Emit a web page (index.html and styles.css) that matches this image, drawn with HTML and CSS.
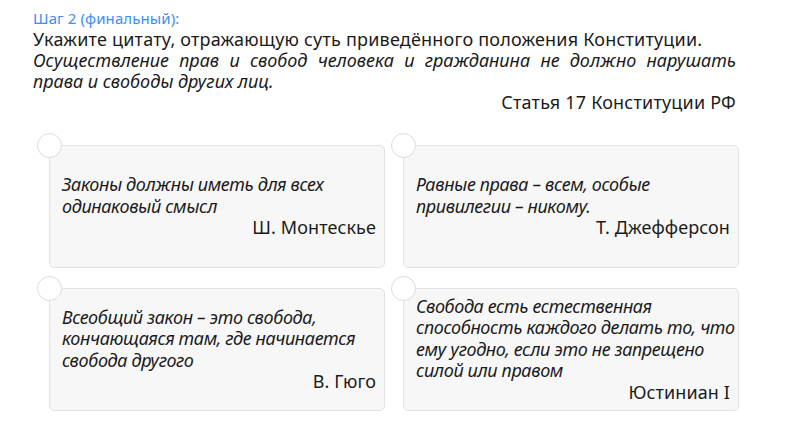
FILE: index.html
```html
<!DOCTYPE html>
<html lang="ru">
<head>
<meta charset="utf-8">
<link rel="stylesheet" href="styles.css">
</head>
<body>
<div class="page">
  <div class="step">Шаг 2 (финальный):</div>
  <div class="task">Укажите цитату, отражающую суть приведённого положения Конституции.</div>
  <div class="quote">Осуществление прав и свобод человека и гражданина не должно нарушать права и свободы других лиц.</div>
  <div class="source">Статья 17 Конституции РФ</div>
  <div class="cards">
    <div class="card">
      <span class="radio"></span>
      <div class="card-body">
        <div class="card-text">Законы должны иметь для всех одинаковый смысл</div>
        <div class="card-author">Ш. Монтескье</div>
      </div>
    </div>
    <div class="card">
      <span class="radio"></span>
      <div class="card-body">
        <div class="card-text">Равные права – всем, особые привилегии – никому.</div>
        <div class="card-author">Т. Джефферсон</div>
      </div>
    </div>
    <div class="card">
      <span class="radio"></span>
      <div class="card-body">
        <div class="card-text">Всеобщий закон – это свобода, кончающаяся там, где начинается свобода другого</div>
        <div class="card-author">В. Гюго</div>
      </div>
    </div>
    <div class="card">
      <span class="radio"></span>
      <div class="card-body">
        <div class="card-text">Свобода есть естественная способность каждого делать то, что ему угодно, если это не запрещено силой или правом</div>
        <div class="card-author">Юстиниан I</div>
      </div>
    </div>
  </div>
</div>
</body>
</html>
```

FILE: styles.css
```css
* { box-sizing: border-box; }
html, body { margin: 0; padding: 0; background: #ffffff; }
body {
  font-family: "Noto Sans", "Open Sans", sans-serif;
  color: #1b1b1b;
}
.page {
  width: 800px;
  padding: 8px 0 0 33px;
}
.step {
  width: 703px;
  font-size: 15px;
  line-height: 21px;
  letter-spacing: 0.1px;
  color: #3c8df5;
}
.task, .quote, .source {
  width: 703px;
  font-size: 18px;
  line-height: 21px;
}
.task, .source {
  letter-spacing: 0.2px;
}
.quote {
  font-style: italic;
  text-align: justify;
}
.source {
  text-align: right;
}
.cards {
  margin: 32px 0 0 16px;
  width: 690px;
  display: grid;
  grid-template-columns: 336px 336px;
  column-gap: 18px;
  row-gap: 20px;
}
.card {
  position: relative;
  height: 123px;
  background: #f7f7f7;
  border: 1px solid #e2e2e2;
  border-radius: 5px;
  display: flex;
  align-items: center;
  padding: 0 0 0 12px;
}
.radio {
  position: absolute;
  left: -13px;
  top: -13px;
  width: 25px;
  height: 25px;
  border-radius: 50%;
  background: #ffffff;
  border: 1px solid #dcdcdc;
}
.card-body {
  width: 100%;
  font-size: 18px;
  line-height: 21.5px;
}
.card-text {
  font-style: italic;
  letter-spacing: -0.35px;
}
.card-author {
  text-align: right;
  letter-spacing: 0.1px;
  padding-right: 8px;
}
```
